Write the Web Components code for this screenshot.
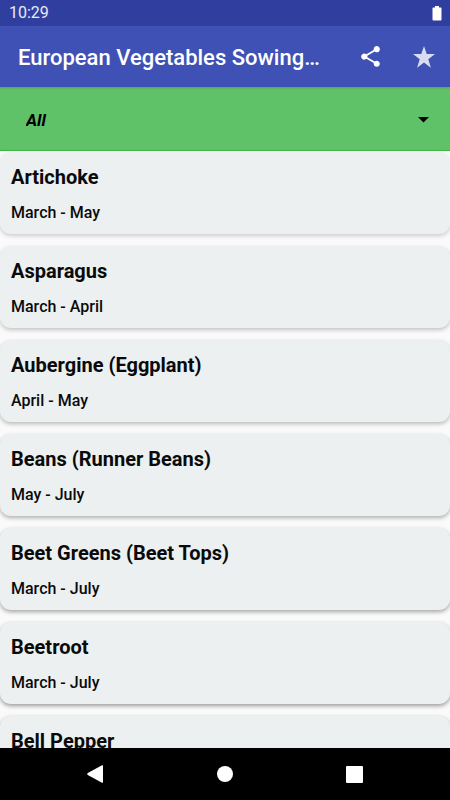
<!DOCTYPE html>
<html lang="en">
<head>
<meta charset="utf-8">
<meta name="viewport" content="width=device-width, initial-scale=1">
<title>European Vegetables Sowing</title>
<style>
    body {
        margin: 0;
        font-family: Roboto, "Liberation Sans", sans-serif;
        background: #fafafa;
        --status: #303f9f;
        --primary: #3f51b5;
        --accent: #60c268;
        --accent-edge: #3fb548;
        --card: #ecf0f1;
    }
</style>
</head>
<body>
<sowing-app>
    <status-bar slot="top">10:29</status-bar>
    <app-bar slot="top">European Vegetables Sowing…</app-bar>
    <month-filter slot="top" data-options="All,January,February,March,April,May,June,July,August,September,October,November,December"></month-filter>
    <veg-card>Artichoke<span slot="period">March - May</span></veg-card>
    <veg-card>Asparagus<span slot="period">March - April</span></veg-card>
    <veg-card>Aubergine (Eggplant)<span slot="period">April - May</span></veg-card>
    <veg-card>Beans (Runner Beans)<span slot="period">May - July</span></veg-card>
    <veg-card>Beet Greens (Beet Tops)<span slot="period">March - July</span></veg-card>
    <veg-card>Beetroot<span slot="period">March - July</span></veg-card>
    <veg-card>Bell Pepper</veg-card>
    <nav-bar slot="bottom"></nav-bar>
</sowing-app>

<script>
function define(name, html, setup) {
    const template = document.createElement('template');
    template.innerHTML = html;
    customElements.define(name, class extends HTMLElement {
        constructor() {
            super();
            this.attachShadow({ mode: 'open' }).appendChild(template.content.cloneNode(true));
        }

        connectedCallback() {
            if (setup) setup(this, this.shadowRoot);
        }
    });
}

define('status-bar', /* html */ `
    <style>
        :host {
            display: flex;
            align-items: center;
            justify-content: space-between;
            height: 26px;
            padding: 0 8px 0 9px;
            background: var(--status);
            color: #e8eaf6;
            font-size: 16px;
            line-height: 28px;
        }
        svg { display: block; }
    </style>
    <slot></slot>
    <svg width="10" height="15" viewBox="0 0 10 15" fill="#fff" role="img" aria-label="Battery full">
        <path d="M3 0h4v1.5h1.6q.9 0 .9.9v11.2q0 .9-.9.9H1.4q-.9 0-.9-.9V2.4q0-.9.9-.9H3z"/>
    </svg>
`);

define('app-bar', /* html */ `
    <style>
        :host {
            display: flex;
            align-items: center;
            height: 61px;
            padding-left: 18px;
            background: var(--primary);
            color: #fff;
        }
        h1 {
            flex: 1;
            min-width: 0;
            margin: 0;
            padding-top: 2px;
            overflow: hidden;
            font-size: 22px;
            font-weight: 500;
            line-height: 32px;
            white-space: nowrap;
            text-overflow: ellipsis;
        }
        button {
            display: flex;
            align-items: center;
            justify-content: center;
            width: 53px;
            height: 53px;
            padding: 0;
            border: none;
            background: none;
            color: inherit;
            cursor: pointer;
        }
    </style>
    <h1><slot></slot></h1>
    <button type="button" aria-label="Share">
        <svg width="25" height="25" viewBox="0 0 24 24" fill="currentColor">
            <path d="M18 16.08c-.76 0-1.44.3-1.96.77L8.91 12.7c.05-.23.09-.46.09-.7s-.04-.47-.09-.7l7.05-4.11c.54.5 1.25.81 2.04.81 1.66 0 3-1.34 3-3s-1.34-3-3-3-3 1.34-3 3c0 .24.04.47.09.7L8.04 9.81C7.5 9.31 6.79 9 6 9c-1.66 0-3 1.34-3 3s1.34 3 3 3c.79 0 1.5-.31 2.04-.81l7.12 4.16c-.05.21-.08.43-.08.65 0 1.61 1.31 2.92 2.92 2.92s2.92-1.31 2.92-2.92-1.31-2.92-2.92-2.92z"/>
        </svg>
    </button>
    <button type="button" aria-label="Favourites">
        <svg width="22" height="22" viewBox="0 0 22 22" fill="#d9dcf0">
            <path d="M11 0l2.7 8.1H22l-6.7 5.1 2.6 8.6L11 16.6l-6.9 5.2 2.6-8.6L0 8.1h8.3z"/>
        </svg>
    </button>
`);

define('month-filter', /* html */ `
    <style>
        :host {
            display: grid;
            align-items: center;
            box-sizing: border-box;
            height: 64px;
            border-bottom: 1px solid var(--accent-edge);
            background: linear-gradient(rgba(0, 0, 0, 0.12), transparent 3px) var(--accent);
        }
        select, svg { grid-area: 1 / 1; }
        select {
            appearance: none;
            width: 100%;
            height: 100%;
            padding: 2px 48px 0 26px;
            border: none;
            border-radius: 0;
            background: none;
            color: #000;
            font: italic 700 17px/24px Roboto, "Liberation Sans", sans-serif;
        }
        svg {
            justify-self: end;
            margin-right: 21px;
            pointer-events: none;
        }
    </style>
    <select aria-label="Sowing month"></select>
    <svg width="11" height="8" viewBox="0 0 11 8"><path d="M0 2h11L5.5 7.5z"/></svg>
`, (host, root) => {
    const select = root.querySelector('select');
    select.replaceChildren(...host.dataset.options.split(',').map((name) => new Option(name)));
});

define('veg-card', /* html */ `
    <style>
        :host {
            display: block;
            flex: none;
            box-sizing: border-box;
            height: 82px;
            padding: 11px;
            border-radius: 11px;
            background: var(--card);
            box-shadow: 0 2px 4px rgba(0, 0, 0, var(--shade, 0.3));
            color: #0a0a0a;
        }
        h2, p { margin: 0; }
        h2 { font-size: 20px; font-weight: 700; line-height: 28px; }
        p { margin-top: 10px; font-size: 16px; font-weight: 500; line-height: 24px; }
    </style>
    <h2><slot></slot></h2>
    <p><slot name="period"></slot></p>
`);

define('nav-bar', /* html */ `
    <style>
        :host {
            display: flex;
            align-items: center;
            justify-content: center;
            gap: 81px;
            height: 52px;
            background: #000;
        }
        button {
            display: flex;
            align-items: center;
            justify-content: center;
            width: 48px;
            height: 48px;
            padding: 0;
            border: none;
            background: none;
            cursor: pointer;
        }
        svg { fill: #fff; }
    </style>
    <button type="button" aria-label="Back">
        <svg width="18" height="18" viewBox="0 0 18 18"><path d="M15 .3q1-.5 1 .7v16q0 1.200-1 .7L.8 10Q-.4 9 .8 8z"/></svg>
    </button>
    <button type="button" aria-label="Home">
        <svg width="16" height="16" viewBox="0 0 16 16"><circle cx="8" cy="8" r="8"/></svg>
    </button>
    <button type="button" aria-label="Recent apps">
        <svg width="17" height="17" viewBox="0 0 17 17"><rect width="17" height="17" rx="1"/></svg>
    </button>
`);

define('sowing-app', /* html */ `
    <style>
        :host {
            display: flex;
            flex-direction: column;
            height: 100vh;
        }
        main {
            display: flex;
            flex: 1;
            flex-direction: column;
            gap: 12px;
            min-height: 0;
            padding-top: 1px;
            overflow: hidden auto;
            scrollbar-width: none;
        }
    </style>
    <slot name="top"></slot>
    <main><slot></slot></main>
    <slot name="bottom"></slot>
`, (host) => {
    // shadows deepen down the screen, as under a light above the top edge
    host.querySelectorAll('veg-card').forEach((card, i) => {
        card.style.setProperty('--shade', 0.18 + i * 0.04);
    });
});
</script>
</body>
</html>
